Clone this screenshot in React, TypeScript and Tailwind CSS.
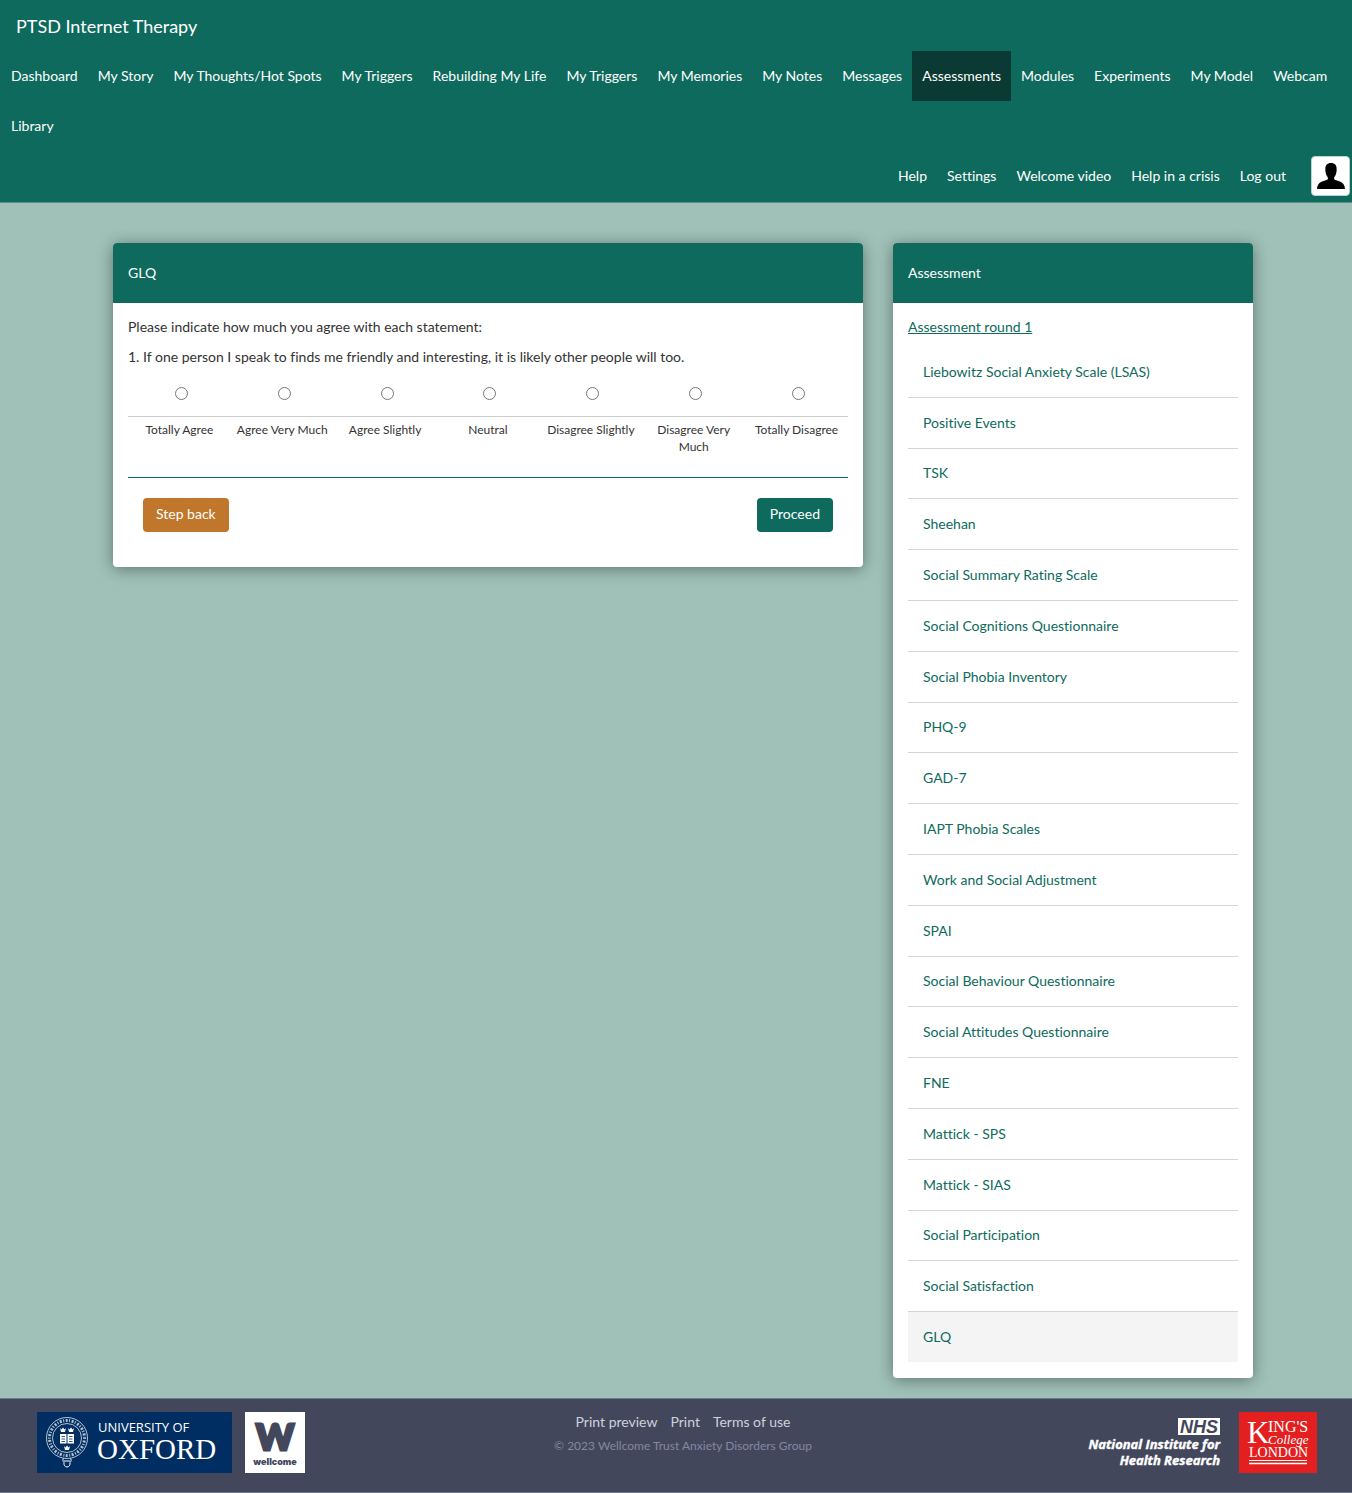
import { useState } from "react";
import clsx from "clsx";

const NAV_ITEMS = [
  "Dashboard",
  "My Story",
  "My Thoughts/Hot Spots",
  "My Triggers",
  "Rebuilding My Life",
  "My Triggers",
  "My Memories",
  "My Notes",
  "Messages",
  "Assessments",
  "Modules",
  "Experiments",
  "My Model",
  "Webcam",
  "Library",
];

const USER_ITEMS = ["Help", "Settings", "Welcome video", "Help in a crisis", "Log out"];

const ANSWERS = [
  "Totally Agree",
  "Agree Very Much",
  "Agree Slightly",
  "Neutral",
  "Disagree Slightly",
  "Disagree Very Much",
  "Totally Disagree",
];

const ASSESSMENTS = [
  "Liebowitz Social Anxiety Scale (LSAS)",
  "Positive Events",
  "TSK",
  "Sheehan",
  "Social Summary Rating Scale",
  "Social Cognitions Questionnaire",
  "Social Phobia Inventory",
  "PHQ-9",
  "GAD-7",
  "IAPT Phobia Scales",
  "Work and Social Adjustment",
  "SPAI",
  "Social Behaviour Questionnaire",
  "Social Attitudes Questionnaire",
  "FNE",
  "Mattick - SPS",
  "Mattick - SIAS",
  "Social Participation",
  "Social Satisfaction",
  "GLQ",
];

const NavLink = ({ label, active = false }: { label: string; active?: boolean }) => (
  <li>
    <a
      href="#"
      aria-current={active ? "page" : undefined}
      className={clsx("block px-[10px] py-[15px]", active && "bg-[#0a3a33]")}
    >
      {label}
    </a>
  </li>
);

const Header = () => (
  <header className="border-b border-[#5f8d83] bg-[#0e6a5c] py-px text-white">
    <a href="#" className="inline-block px-4 py-[15px] align-top text-lg leading-5">
      PTSD Internet Therapy
    </a>
    <nav aria-label="Main">
      <ul className="flex flex-wrap px-px">
        {NAV_ITEMS.map((item, i) => (
          <NavLink key={i} label={item} active={item === "Assessments"} />
        ))}
      </ul>
    </nav>
    <nav aria-label="Account" className="flex items-center justify-end pr-0.5">
      <ul className="flex flex-wrap">
        {USER_ITEMS.map((item) => (
          <NavLink key={item} label={item} />
        ))}
      </ul>
      <a
        href="#"
        aria-label="Profile"
        className="ml-[15px] flex h-10 w-[39px] items-center justify-center rounded-sm border border-[#bcd3ce] bg-white"
      >
        <svg viewBox="0 0 28 26" className="h-[26px] w-7" fill="#000">
          <path d="M14 0C10.200 0 8.200 2.200 8.400 6c0 .8-.2 1.500.1 2.600.2 1.800.7 3.700 1.900 5.200.5.700.6 1.500.5 2.300-.6 1.300-2.900 1.500-5.700 2.400C1.900 19.700.2 22 0 26h28c-.2-4-1.900-6.300-5.200-7.500-2.800-.9-5.100-1.100-5.700-2.400-.1-.8 0-1.600.5-2.300 1.200-1.500 1.700-3.400 1.900-5.200.3-1.100.1-1.800.1-2.600C19.800 2.200 17.800 0 14 0Z" />
        </svg>
      </a>
    </nav>
  </header>
);

const Card = ({ title, className, children }: { title: string; className?: string; children: React.ReactNode }) => (
  <section className={clsx("flex flex-col rounded bg-white shadow-[0_2px_16px_rgba(0,0,0,0.4)]", className)}>
    <h2 className="rounded-t bg-[#0e6a5c] px-[15px] py-5 leading-5 text-white">{title}</h2>
    {children}
  </section>
);

const Questionnaire = () => {
  const [answer, setAnswer] = useState<string | null>(null);

  return (
    <Card title="GLQ" className="self-start">
      <form className="px-[15px] pt-[14px] pb-[35px]" onSubmit={(e) => e.preventDefault()}>
        <p className="mb-[10px]">Please indicate how much you agree with each statement:</p>
        <fieldset>
          <legend>1. If one person I speak to finds me friendly and interesting, it is likely other people will too.</legend>
          <div className="mt-[10px] grid grid-cols-7 border-b border-[#0e6a5c] pb-[22px]">
            {ANSWERS.map((item) => (
              <label key={item} className="text-center text-xs leading-[17px]">
                <span className="mb-1 flex h-10 items-center justify-center border-b border-[#ccc] pb-1.5 pl-1">
                  <input
                    type="radio"
                    name="answer"
                    value={item}
                    checked={answer === item}
                    onChange={() => setAnswer(item)}
                    className="size-[13px]"
                  />
                </span>
                <span className="block px-[5px]">{item}</span>
              </label>
            ))}
          </div>
        </fieldset>
        <div className="mt-5 flex justify-between px-[15px]">
          <button type="button" className="rounded bg-[#c0762b] px-[13px] pt-[6px] pb-2 text-white">
            Step back
          </button>
          <button type="submit" className="rounded bg-[#0e6a5c] px-[13px] pt-[6px] pb-2 text-white">
            Proceed
          </button>
        </div>
      </form>
    </Card>
  );
};

const AssessmentList = () => (
  <Card title="Assessment">
    <div className="flex flex-1 flex-col px-[15px] pt-[14px] pb-4 text-[#0e6a5c]">
      <a href="#" className="self-start underline">
        Assessment round 1
      </a>
      <ul className="mt-[10px] flex flex-1 flex-col">
        {ASSESSMENTS.map((item) => (
          <li key={item} className="flex flex-1 border-b border-[#d5d5d5] last:border-b-0 last:bg-[#f4f4f4]">
            <a href="#" className="flex flex-1 items-center px-[15px] py-[14px]">
              {item}
            </a>
          </li>
        ))}
      </ul>
    </div>
  </Card>
);

const OxfordLogo = () => (
  <svg viewBox="0 0 195 61" className="h-[61px] w-[195px]" role="img" aria-label="University of Oxford">
    <rect width="195" height="61" fill="#002e62" />
    <g fill="none" stroke="#fff">
      <circle cx="30" cy="26" r="20.5" strokeWidth=".7" />
      <circle cx="30" cy="26" r="17.5" strokeWidth="3" strokeDasharray="1 1.6 2 1.4" opacity=".7" />
      <circle cx="30" cy="26" r="14.5" strokeWidth=".7" />
      <path d="M27 46.500c-2 1-1 3 0 4-.5 2.500 1 4.500 3 4.500s3.500-2 3-4.500c1-1 2-3 0-4M27 49h6" strokeWidth="1" />
    </g>
    <path d="M23 22h6.500v9.500H23zM30.500 22H37v9.500h-6.500z" fill="#fff" />
    <path d="M24.500 24.500h3.500M24.500 27h3.500M24.500 29.500h3.500M32 24.500h3.500M32 27h3.500M32 29.500h3.500" stroke="#002e62" strokeWidth=".8" />
    <path
      d="M23 16l1.500 1.500 1.500-2 1.500 2L29 16l-1 4h-4zM31 16l1.500 1.500 1.500-2 1.500 2L37 16l-1 4h-4zM27 34l1.500 1.500 1.500-2 1.500 2L33 34l-1 4h-4z"
      fill="#fff"
    />
    <g fill="#fff">
      <text x="61" y="20" fontFamily="Open Sans, sans-serif" fontSize="13">
        UNIVERSITY OF
      </text>
      <text x="60" y="47" fontFamily="Liberation Serif, serif" fontSize="29">
        OXFORD
      </text>
    </g>
  </svg>
);

const WellcomeLogo = () => (
  <svg viewBox="0 0 60 61" className="h-[61px] w-[60px]" role="img" aria-label="Wellcome">
    <rect width="60" height="61" fill="#fff" />
    <g fill="#43475c" textAnchor="middle" fontWeight="900">
      <text x="30" y="38" fontFamily="Lato, sans-serif" fontSize="36" stroke="#43475c" strokeWidth="3">
        W
      </text>
      <text x="30" y="53" fontFamily="Inter, sans-serif" fontSize="9">
        wellcome
      </text>
    </g>
  </svg>
);

const NihrLogo = () => (
  <svg
    viewBox="0 0 140 61"
    className="h-[61px] w-[140px]"
    role="img"
    aria-label="NHS National Institute for Health Research"
  >
    <rect x="95" y="6" width="42" height="17" fill="#fff" />
    <g fontStyle="italic" fontWeight="700">
      <text x="97" y="21" fontFamily="Liberation Sans, sans-serif" fontSize="18" fill="#43475c">
        NHS
      </text>
      <g fontFamily="Open Sans, sans-serif" fontSize="13" fill="#fff" stroke="#fff" strokeWidth=".4" textAnchor="end">
        <text x="137" y="37">
          National Institute for
        </text>
        <text x="137" y="53">
          Health Research
        </text>
      </g>
    </g>
  </svg>
);

const KingsLogo = () => (
  <svg viewBox="0 0 78 61" className="h-[61px] w-[78px]" role="img" aria-label="King's College London">
    <rect width="78" height="61" fill="#e31f1f" />
    <g fill="#fff" fontFamily="Liberation Serif, serif">
      <text x="8" y="31" fontSize="31">
        K
      </text>
      <text x="29" y="20" fontSize="16">
        ING'S
      </text>
      <text x="29" y="32" fontSize="13" fontStyle="italic">
        College
      </text>
      <text x="10" y="45" fontSize="14">
        LONDON
      </text>
    </g>
    <path d="M10 48.500h58" stroke="#fff" strokeWidth="1" />
    <path d="M10 51.500h58" stroke="#fff" strokeWidth="1.500" />
  </svg>
);

const Footer = () => (
  <footer className="grid grid-cols-[1fr_auto_1fr] border-y border-[#6c7a86] bg-[#43475c] pt-[13px] pr-[35px] pb-[19px] pl-[37px]">
    <div className="flex gap-[13px]">
      <OxfordLogo />
      <WellcomeLogo />
    </div>
    <div className="pl-3 text-center">
      <ul className="flex justify-center gap-[13px] text-[#cfd1da]">
        {["Print preview", "Print", "Terms of use"].map((item) => (
          <li key={item}>
            <a href="#">{item}</a>
          </li>
        ))}
      </ul>
      <p className="mt-[5px] text-xs leading-[17px] text-[#8488a3]">© 2023 Wellcome Trust Anxiety Disorders Group</p>
    </div>
    <div className="flex justify-end gap-4">
      <NihrLogo />
      <KingsLogo />
    </div>
  </footer>
);

const App = () => (
  <div className="flex min-h-screen flex-col bg-[#9fc1b8] font-['Lato',sans-serif] text-sm leading-5 text-[#333] [font-variant-ligatures:no-common-ligatures]">
    <Header />
    <div className="flex flex-1 justify-center pt-10 pb-5 pl-[14px]">
      <main className="grid w-full max-w-[1140px] grid-cols-[25fr_12fr] gap-[30px]">
        <Questionnaire />
        <AssessmentList />
      </main>
    </div>
    <Footer />
  </div>
);

export default App;
